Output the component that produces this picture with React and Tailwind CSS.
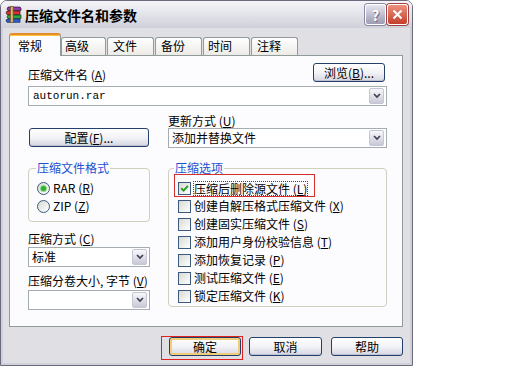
import React from "react";

function Btn({ children, className = "", def = false }) {
  return (
    <div
      className={`h-[19px] rounded-[3px] border border-[#22406a] bg-linear-to-b from-white via-[#f3f3f7] to-[#d5d6e2] text-[12px] leading-[14px] flex items-center justify-center text-black ${def ? "shadow-[inset_0_0_0_2px_#f2cd78]" : "shadow-[inset_0_-1px_0_#c0c1d0]"} ${className}`}
    >
      {children}
    </div>
  );
}

function Acc({ c }) {
  return (
    <span>
      {" "}(<span className="underline underline-offset-[1px]">{c}</span>)
    </span>
  );
}

function Combo({ children, className = "", mono = false }) {
  return (
    <div className={`h-[20px] flex items-center border border-[#a5acb2] bg-white ${className}`}>
      <span className={mono ? "pl-[4px] font-['Liberation_Mono',monospace] text-[11px]" : "pl-[3px]"}>{children}</span>
      <div className="ml-auto mr-[2px] w-[15px] h-[16px] rounded-[2px] border border-[#c5c6d3] bg-linear-to-b from-[#f8f8fb] to-[#c8c9d6] flex items-center justify-center">
        <svg width="8" height="6" viewBox="0 0 8 6">
          <path d="M1 1 L4 4 L7 1" stroke="#3f4255" strokeWidth="1.7" fill="none" />
        </svg>
      </div>
    </div>
  );
}

function Check({ checked = false }) {
  return (
    <span className="w-[13px] h-[13px] border border-[#3b5a7e] bg-linear-to-br from-[#d9d9d3] to-white flex items-center justify-center shrink-0">
      {checked && (
        <svg width="9" height="9" viewBox="0 0 9 9">
          <path d="M1.2 4.2 L3.6 6.6 L7.9 1.8" stroke="#22a322" strokeWidth="2" fill="none" />
        </svg>
      )}
    </span>
  );
}

function Radio({ checked = false }) {
  return (
    <span className="w-[13px] h-[13px] rounded-full border border-[#3b5a7e] bg-linear-to-br from-[#d9d9d3] to-white flex items-center justify-center shrink-0">
      {checked && <span className="w-[5px] h-[5px] rounded-full bg-[#2fae2f] shadow-[0_0_0_1px_#8fdc8f]" />}
    </span>
  );
}

export default function App() {
  const opts = [
    ["创建自解压格式压缩文件", "X"],
    ["创建固实压缩文件", "S"],
    ["添加用户身份校验信息", "T"],
    ["添加恢复记录", "P"],
    ["测试压缩文件", "E"],
    ["锁定压缩文件", "K"],
  ];
  return (
    <div className="w-[512px] h-[384px] bg-white font-['Noto_Sans_CJK_SC',sans-serif] text-[12px] leading-[14px] text-black">
      <div className="w-[413px] h-[366px] flex flex-col border border-[#6b6b7e] rounded-t-[7px] overflow-hidden">
        {/* title bar */}
        <div className="h-[27px] shrink-0 flex items-center pl-[4px] pr-[4px] bg-linear-to-b from-[#f4f4f8] via-[#e3e3ea] to-[#cfcfda]">
          <svg width="17" height="17" viewBox="0 0 17 17">
            <path d="M3 1 H15 L16 2 V4.5 H3 L2 3 Z" fill="#8e3aa6" stroke="#2e1238" strokeWidth="0.7" />
            <path d="M2 5 H15 V8.5 H2 L1 7 Z" fill="#d83232" stroke="#4a1010" strokeWidth="0.7" />
            <path d="M3 9 H16 V12.5 H3 L2 11 Z" fill="#2ea442" stroke="#103a18" strokeWidth="0.7" />
            <path d="M2 13 H15 V16.3 H2 L1 15 Z" fill="#2d5fd2" stroke="#0f2050" strokeWidth="0.7" />
            <rect x="5.5" y="0.6" width="2.6" height="16" fill="#dcb76c" stroke="#6d4c1e" strokeWidth="0.6" />
          </svg>
          <span className="ml-[3px] text-[14px] leading-[16px] font-bold text-black">压缩文件名和参数</span>
          <div className="ml-auto flex items-center gap-[1px]">
            <div className="w-[21px] h-[21px] rounded-[3px] border border-white bg-linear-to-b from-[#e6e6ef] to-[#9c9cb4] flex items-center justify-center shadow-[0_0_0_1px_#8a8aa0]">
              <span className="text-[14px] leading-[14px] font-bold text-white [text-shadow:1px_1px_0_#6d6d85]">?</span>
            </div>
            <div className="w-[21px] h-[21px] rounded-[3px] border border-white bg-linear-to-b from-[#ec917d] to-[#c33d2d] flex items-center justify-center shadow-[0_0_0_1px_#a04040]">
              <svg width="11" height="11" viewBox="0 0 11 11">
                <path d="M1.5 1.5 L9.5 9.5 M9.5 1.5 L1.5 9.5" stroke="white" strokeWidth="2" />
              </svg>
            </div>
          </div>
        </div>
        {/* body */}
        <div className="flex-1 bg-[#e0dfe3] border-x-2 border-b-2 border-[#d0d0da]">
          <div className="pl-[6px] pt-[5px]">
            {/* tabs */}
            <div className="flex items-end h-[22px]">
              <div className="relative z-10 mb-[-1px] w-[52px] h-[23px] rounded-t-[3px] border-x border-[#919b9c] border-t-2 border-t-[#e68b2c] bg-[#fcfcfe] shadow-[inset_0_1px_0_#ffc73c] flex items-center pl-[8px]">
                常规
              </div>
              <div className="w-[45px] h-[18px] rounded-t-[3px] border border-b-0 border-[#919b9c] bg-linear-to-b from-white to-[#ecebe6] pl-[3px] pb-[1px] flex items-center">高级</div>
              <div className="ml-[1px] w-[47px] h-[18px] rounded-t-[3px] border border-b-0 border-[#919b9c] bg-linear-to-b from-white to-[#ecebe6] pl-[5px] pb-[1px] flex items-center">文件</div>
              <div className="ml-[1px] w-[47px] h-[18px] rounded-t-[3px] border border-b-0 border-[#919b9c] bg-linear-to-b from-white to-[#ecebe6] pl-[5px] pb-[1px] flex items-center">备份</div>
              <div className="ml-[1px] w-[47px] h-[18px] rounded-t-[3px] border border-b-0 border-[#919b9c] bg-linear-to-b from-white to-[#ecebe6] pl-[4px] pb-[1px] flex items-center">时间</div>
              <div className="ml-[1px] w-[47px] h-[18px] rounded-t-[3px] border border-b-0 border-[#919b9c] bg-linear-to-b from-white to-[#ecebe6] pl-[5px] pb-[1px] flex items-center">注释</div>
            </div>
            {/* panel */}
            <div className="w-[394px] h-[272px] border border-[#919b9c] bg-[#fcfcfe] pl-[18px] pt-[7px]">
              <div className="flex w-[359px] items-end justify-between">
                <span>压缩文件名<Acc c="A" /></span>
                <Btn className="w-[72px] mr-[2px]">浏览<Acc c="B" />...</Btn>
              </div>
              <Combo className="mt-[4px] w-[359px]" mono>autorun.rar</Combo>
              <div className="mt-[8px] grid grid-cols-[122px_219px] gap-x-[18px] items-start">
                {/* left column */}
                <div className="flex flex-col">
                  <Btn className="mt-[14px] ml-[1px] w-[120px]">配置<Acc c="F" />...</Btn>
                  <fieldset className="mt-[14px] border border-[#d0d0bf] rounded-[4px] pl-[8px] pt-[4px] pb-[6px]">
                    <legend className="text-[#1c4fcf] px-[1px] -ml-px leading-[14px]">压缩文件格式</legend>
                    <div className="h-[18px] flex items-center gap-[3px]">
                      <Radio checked />
                      <span>RAR<Acc c="R" /></span>
                    </div>
                    <div className="h-[18px] flex items-center gap-[3px]">
                      <Radio />
                      <span>ZIP<Acc c="Z" /></span>
                    </div>
                  </fieldset>
                  <span className="mt-[10px]">压缩方式<Acc c="C" /></span>
                  <Combo className="mt-[1px] w-[122px]">标准</Combo>
                  <span className="mt-[7px]">压缩分卷大小, 字节<Acc c="V" /></span>
                  <Combo className="mt-[2px] w-[122px]"></Combo>
                </div>
                {/* right column */}
                <div className="flex flex-col">
                  <span>更新方式<Acc c="U" /></span>
                  <Combo className="w-[219px]">添加并替换文件</Combo>
                  <fieldset className="mt-[13px] border border-[#d0d0bf] rounded-[4px] pl-[9px] pt-[4px] pb-[1px]">
                    <legend className="text-[#1c4fcf] px-[1px] -ml-[4px] leading-[14px]">压缩选项</legend>
                    <div className="relative h-[18px] flex items-center">
                      <Check checked />
                      <span className="ml-[2px] border border-dotted border-[#444] leading-[13px] px-0">压缩后删除源文件<Acc c="L" /></span>
                      <div className="absolute -left-[4px] -top-[5px] w-[141px] h-[23px] border border-[#d8302c] pointer-events-none" />
                    </div>
                    {opts.map(([t, k]) => (
                      <div key={k} className="h-[18px] flex items-center gap-[3px]">
                        <Check />
                        <span>{t}<Acc c={k} /></span>
                      </div>
                    ))}
                  </fieldset>
                </div>
              </div>
            </div>
            {/* bottom buttons */}
            <div className="flex items-start mt-[9px] pl-[152px]">
              <div className="w-[82px] h-[24px] border border-[#e0201c] pl-[7px]">
                <Btn className="w-[72px]" def>确定</Btn>
              </div>
              <Btn className="ml-[6px] mt-[1px] w-[73px]">取消</Btn>
              <Btn className="ml-[9px] mt-[1px] w-[72px]">帮助</Btn>
            </div>
          </div>
        </div>
      </div>
    </div>
  );
}
